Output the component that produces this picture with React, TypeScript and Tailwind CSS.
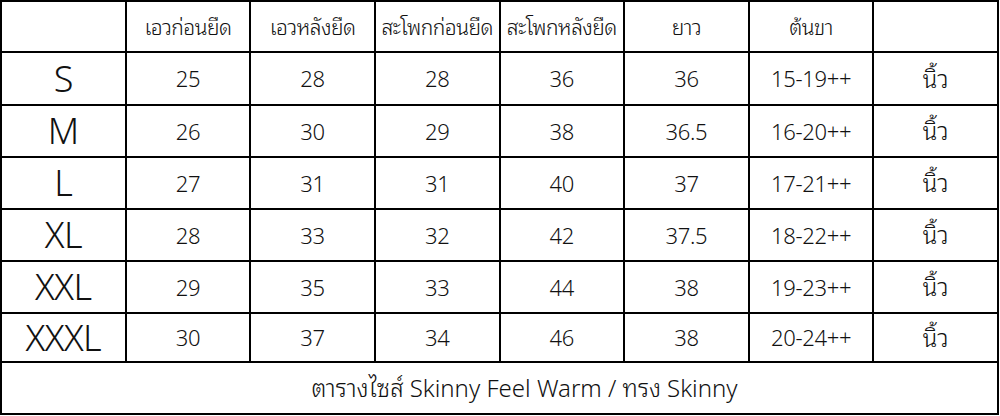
import React from 'react';

const headers = ['', 'เอวก่อนยืด', 'เอวหลังยืด', 'สะโพกก่อนยืด', 'สะโพกหลังยืด', 'ยาว', 'ต้นขา', ''];

const rows = [
  ['S', '25', '28', '28', '36', '36', '15-19++'],
  ['M', '26', '30', '29', '38', '36.5', '16-20++'],
  ['L', '27', '31', '31', '40', '37', '17-21++'],
  ['XL', '28', '33', '32', '42', '37.5', '18-22++'],
  ['XXL', '29', '35', '33', '44', '38', '19-23++'],
  ['XXXL', '30', '37', '34', '46', '38', '20-24++'],
];

const App = () => {
  return (
    <div
      className="w-[1000px] h-[416px] bg-white"
      style={{ fontFamily: '"Noto Sans", "Noto Sans Thai Looped", "Noto Sans Thai UI", Loma, Garuda, Tahoma, "Noto Sans Thai", sans-serif' }}
    >
      <div className="grid grid-cols-8 grid-rows-[49px_51px_50px_50px_50px_50px_47px_50px] gap-[2px] p-[2px] bg-black w-[999px] text-[#111]">
        {headers.map((h, i) => (
          <div key={i} className="bg-white flex items-center justify-center pt-[2px] text-[21px] font-light tracking-[-0.5px] whitespace-nowrap">
            {h}
          </div>
        ))}
        {rows.map((r) => (
          <React.Fragment key={r[0]}>
            <div className="bg-white flex items-center justify-center text-[36px] font-light tracking-[-0.5px]">{r[0]}</div>
            {r.slice(1).map((v, j) => (
              <div key={j} className="bg-white flex items-center justify-center text-[22px] font-light tracking-[-0.3px]">
                {v}
              </div>
            ))}
            <div className="bg-white flex items-center justify-center text-[24px] font-light">นิ้ว</div>
          </React.Fragment>
        ))}
        <div className="col-span-8 bg-white flex items-center justify-center pl-[50px] text-[24px] font-light">
          ตารางไซส์ Skinny Feel Warm / ทรง Skinny
        </div>
      </div>
    </div>
  );
};

export default App;
